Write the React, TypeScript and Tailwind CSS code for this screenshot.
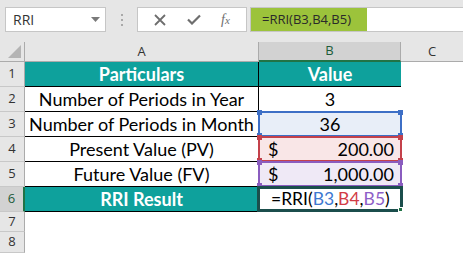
import React from 'react';

type Range = 'blue' | 'red' | 'purple';

interface Row {
  n: number;
  a: string;
  b?: string;
  money?: string;
  head?: boolean;
  range?: Range;
  formula?: boolean;
  h: string;
}

const rows: Row[] = [
  { n: 1, a: 'Particulars', b: 'Value', head: true, h: 'h-[25px]' },
  { n: 2, a: 'Number of Periods in Year', b: '3', h: 'h-[25px]' },
  { n: 3, a: 'Number of Periods in Month', b: '36', range: 'blue', h: 'h-[25px]' },
  { n: 4, a: 'Present Value (PV)', money: '200.00', range: 'red', h: 'h-[25px]' },
  { n: 5, a: 'Future Value (FV)', money: '1,000.00', range: 'purple', h: 'h-[25px]' },
  { n: 6, a: 'RRI Result', head: true, formula: true, h: 'h-[25px]' },
];

const rangeStyle: Record<Range, { bg: string; line: string; sq: string }> = {
  blue: { bg: 'bg-[#e8eef8]', line: 'border-[#3d6fc6]', sq: 'bg-[#3d6fc6]' },
  red: { bg: 'bg-[#f9e6e7]', line: 'border-[#c4414b]', sq: 'bg-[#c4414b]' },
  purple: { bg: 'bg-[#efe9f6]', line: 'border-[#8a5cbf]', sq: 'bg-[#8a5cbf]' },
};

const cellFont = "font-['Lato',sans-serif] text-[18px]";

function RangeBox({ r }: { r: Range }) {
  const s = rangeStyle[r];
  return (
    <div className={`absolute -left-px -top-px -right-px -bottom-px border-2 ${s.line} pointer-events-none`}>
      <span className={`absolute -left-[3px] -top-[3px] w-[5px] h-[5px] ${s.sq}`} />
      <span className={`absolute -right-[3px] -top-[3px] w-[5px] h-[5px] ${s.sq}`} />
      <span className={`absolute -left-[3px] -bottom-[3px] w-[5px] h-[5px] ${s.sq}`} />
      <span className={`absolute -right-[3px] -bottom-[3px] w-[5px] h-[5px] ${s.sq}`} />
    </div>
  );
}

function Toolbar() {
  return (
    <div className="h-[42px] bg-[#e6e6e6] flex items-start pt-[7px] font-['Open_Sans',sans-serif]">
      <div className="ml-[5px] w-[101px] h-[25px] bg-white border border-[#c6c6c6] flex items-center justify-between pl-[7px] pr-[5px]">
        <span className="text-[14px] text-[#333]">RRI</span>
        <svg width="9" height="5" viewBox="0 0 9 5"><path d="M0 0h9L4.5 5z" fill="#7a7a7a" /></svg>
      </div>
      <div className="w-[31px] h-[25px] flex flex-col items-center justify-center gap-[3px]">
        <span className="w-[2px] h-[2px] bg-[#a9a9a9]" />
        <span className="w-[2px] h-[2px] bg-[#a9a9a9]" />
        <span className="w-[2px] h-[2px] bg-[#a9a9a9]" />
      </div>
      <div className="w-[110px] h-[25px] bg-white border border-[#c6c6c6] flex items-center justify-around px-[6px]">
        <svg width="12" height="12" viewBox="0 0 12 12"><path d="M1 1l10 10M11 1L1 11" stroke="#6e6e6e" strokeWidth="1.8" /></svg>
        <svg width="14" height="11" viewBox="0 0 14 11"><path d="M1 5.5l4 4L13 1.5" stroke="#6e6e6e" strokeWidth="2.2" fill="none" /></svg>
        <span className="font-['Liberation_Serif',serif] italic text-[14px] text-[#6e6e6e] leading-none">f<span className="text-[11px]">x</span></span>
      </div>
      <div className="ml-[3px] flex-1 h-[25px] bg-white border border-[#c6c6c6] border-r-0 flex">
        <div className="w-[116px] h-full bg-[#9cc33b] flex items-center pl-[11px] text-[13px] text-[#2a2a2a]">=RRI(B3,B4,B5)</div>
      </div>
    </div>
  );
}

export default function App() {
  return (
    <div className="w-[463px] h-[253px] overflow-hidden bg-white">
      <Toolbar />
      <div className="grid grid-cols-[25px_234px_142px_62px]">
        {/* column headers */}
        <div className="h-[20px] bg-[#e6e6e6] border-r border-b border-[#ababab] relative">
          <svg className="absolute right-[3px] bottom-[3px]" width="13" height="13" viewBox="0 0 13 13"><path d="M13 0V13H0z" fill="#b4b4b4" /></svg>
        </div>
        <div className="h-[20px] bg-[#e6e6e6] border-r border-b border-[#ababab] flex items-center justify-center text-[13px] text-[#333] font-['Open_Sans',sans-serif]">A</div>
        <div className="h-[20px] bg-[#d2d2d2] border-r border-b-2 border-r-[#ababab] border-b-[#217346] flex items-center justify-center text-[13px] text-[#1d5c3a] font-['Open_Sans',sans-serif]">B</div>
        <div className="h-[20px] bg-[#e6e6e6] border-b border-[#ababab] flex items-center justify-center text-[13px] text-[#333] font-['Open_Sans',sans-serif]">C</div>

        {rows.map(r => (
          <React.Fragment key={r.n}>
            <div className={`${r.h} border-b border-[#c8c8c8] flex items-center justify-center text-[13px] font-['Open_Sans',sans-serif] ${r.formula ? 'bg-[#d2d2d2] text-[#1d5c3a] border-r-2 border-r-[#217346]' : 'bg-[#e6e6e6] text-[#333] border-r border-r-[#ababab]'}`}>{r.n}</div>
            <div className={`${r.h} border-b border-r border-black flex items-center justify-center ${cellFont} ${r.head ? 'bg-[#0ea19c] text-white font-bold' : 'text-black'}`}>{r.a}</div>
            <div className={`${r.h} relative border-b border-black flex items-center ${cellFont} ${r.head ? 'bg-[#0ea19c] text-white font-bold' : 'text-black'} ${r.range ? rangeStyle[r.range].bg : ''}`}>
              {r.b && <span className="w-full text-center">{r.b}</span>}
              {r.money && (
                <span className="w-full flex justify-between pl-[9px] pr-[7px]"><span>$</span><span>{r.money}</span></span>
              )}
              {r.formula && (
                <div className="absolute -left-[2px] -top-px -right-[2px] -bottom-px bg-white border-[3px] border-[#1b4e4c] flex items-center pl-[11px] text-[17.5px] text-black font-normal">
                  <span>=RRI(</span><span className="text-[#3d78d0]">B3</span><span>,</span><span className="text-[#d23c46]">B4</span><span>,</span><span className="text-[#8e5ec8]">B5</span><span>)</span>
                  <span className="absolute -right-[3px] -bottom-[3px] w-[5px] h-[5px] bg-[#217346] border border-white" />
                </div>
              )}
              {r.range && <RangeBox r={r.range} />}
            </div>
            <div className={`${r.h}`} />
          </React.Fragment>
        ))}

        <div className="h-[20px] bg-[#e6e6e6] border-r border-b border-[#c8c8c8] border-r-[#ababab] flex items-center justify-center text-[13px] text-[#333] font-['Open_Sans',sans-serif]">7</div>
        <div className="h-[20px] col-span-3" />
        <div className="h-[21px] bg-[#e6e6e6] border-r border-b border-[#c8c8c8] border-r-[#ababab] flex items-center justify-center text-[13px] text-[#333] font-['Open_Sans',sans-serif]">8</div>
        <div className="h-[21px] col-span-3" />
      </div>
    </div>
  );
}
